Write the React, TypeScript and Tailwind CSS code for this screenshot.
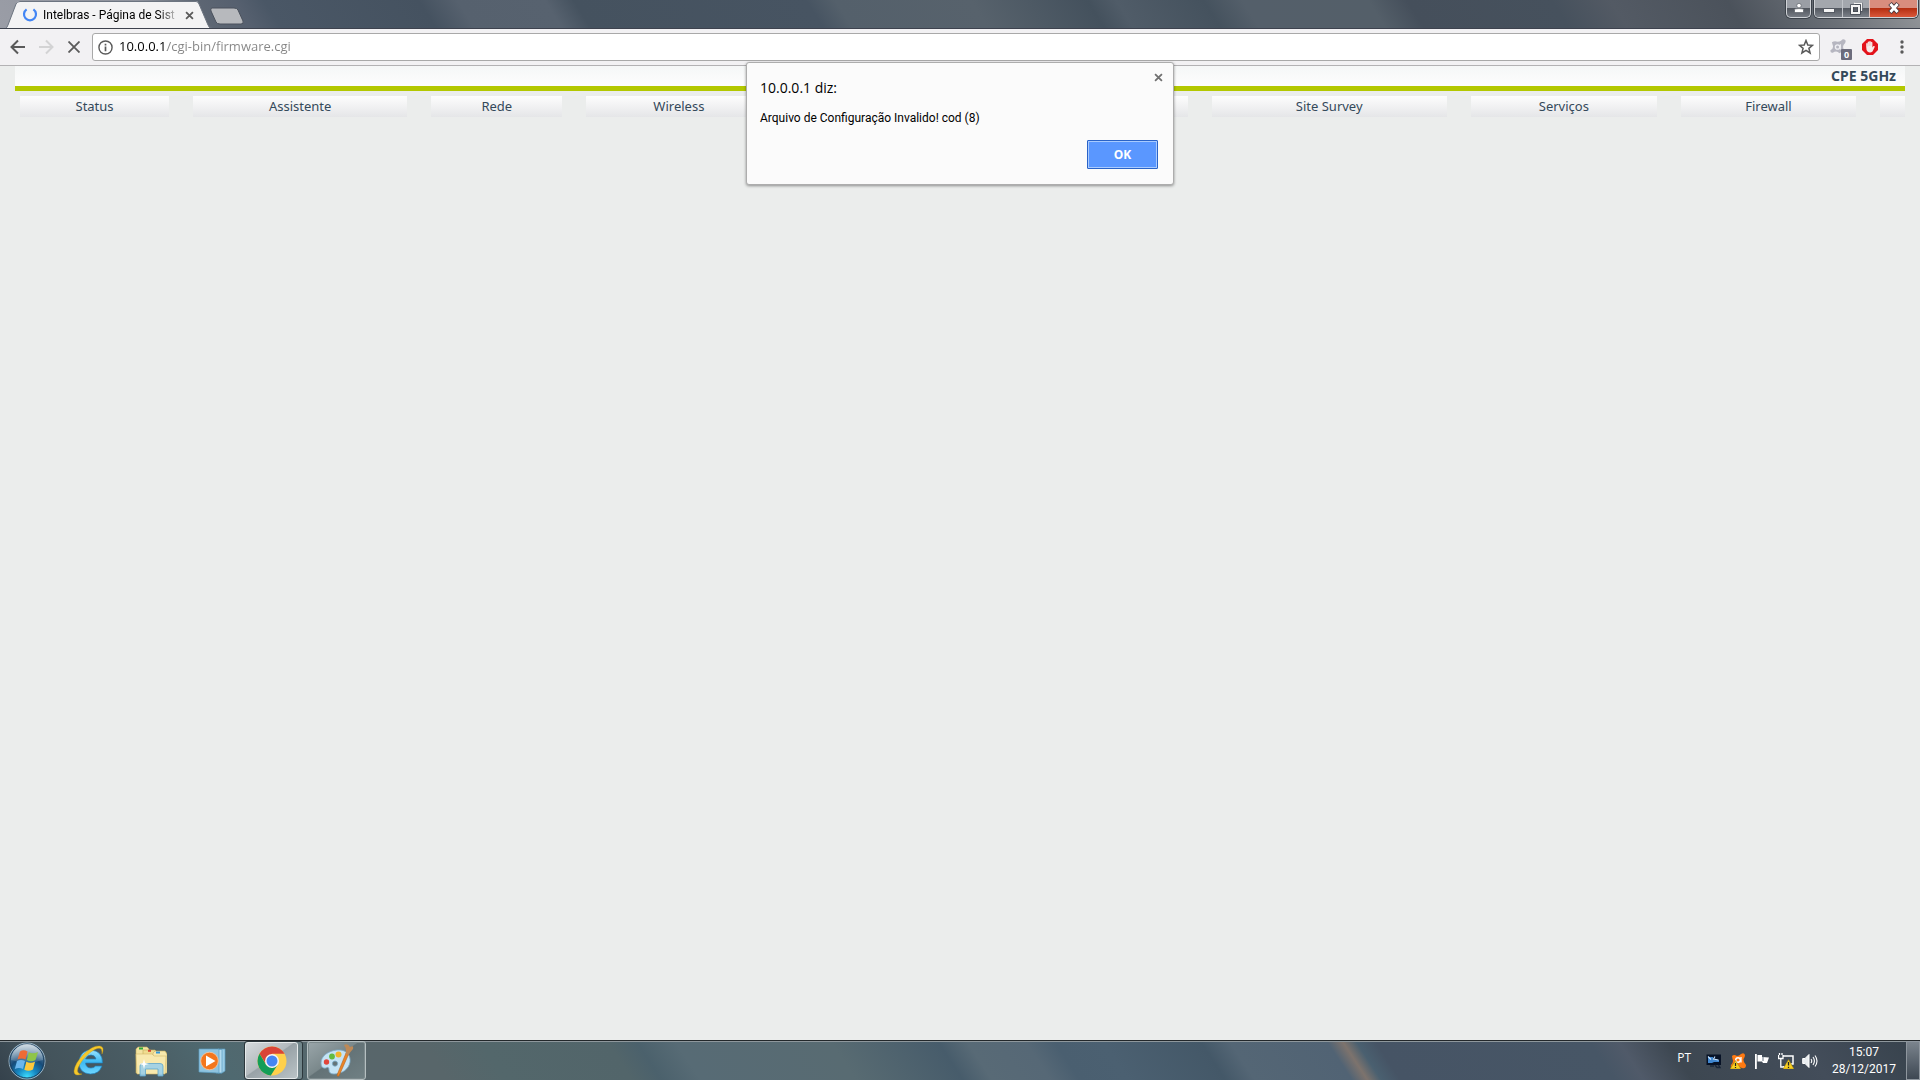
import React from 'react';

interface MenuTab {
    label: string;
    width: string;
}

const MENU_TABS: MenuTab[] = [
    { label: 'Status', width: 'grow-[149]' },
    { label: 'Assistente', width: 'grow-[214]' },
    { label: 'Rede', width: 'grow-[131]' },
    { label: 'Wireless', width: 'grow-[185]' },
    { label: '', width: 'grow-[392]' },
    { label: 'Site Survey', width: 'grow-[235]' },
    { label: 'Serviços', width: 'grow-[186]' },
    { label: 'Firewall', width: 'grow-[175]' },
    { label: '', width: 'grow-[25]' },
];

const CloseGlyph: React.FC<{ className?: string }> = ({ className }) => (
    <svg viewBox="0 0 10 10" className={className} fill="none" stroke="currentColor" strokeWidth="2">
        <path d="M1.2 1.2 8.8 8.8M8.8 1.2 1.2 8.8" />
    </svg>
);

/* ---------- Browser chrome ---------- */

const BrowserTab: React.FC = () => (
    <div className="relative w-[208px] h-[28px] ml-[5px] mt-px shrink-0">
        <svg className="absolute inset-0 w-full h-full" viewBox="0 0 208 28" preserveAspectRatio="none">
            <path d="M0 28Q2 27 3 24L11 3Q12 0 15 0H191Q193 0 194 3L203 24Q204 28 208 28Z" fill="#f3f3f4" />
            <path d="M0 28Q2 27 3 24L11 3Q12 .5 15 .5H191Q193 .5 194 3L203 24Q204 27.5 208 27.5" fill="none" stroke="#6c7480" />
        </svg>
        <div className="relative flex items-center h-full pl-[17px]">
            <svg viewBox="0 0 16 16" className="w-4 h-4 shrink-0" fill="none" stroke="#4285f4" strokeWidth="2.2">
                <path d="M4.6 2.4A6 6 0 1 0 11.4 2.4" />
            </svg>
            <span className="ml-[5px] w-[136px] whitespace-nowrap font-[Roboto,sans-serif] text-[12px] text-black mask-[linear-gradient(90deg,#000_116px,transparent_136px)]">
                Intelbras - Página de Sist
            </span>
            <button aria-label="Fechar guia" className="ml-[6px] text-[#5a5a5a]">
                <CloseGlyph className="w-[9px] h-[9px]" />
            </button>
        </div>
    </div>
);

const WindowControls: React.FC = () => (
    <div className="flex items-start gap-[3px] ml-auto mr-[2px] shrink-0">
        <button
            aria-label="Usuário"
            className="flex justify-center pt-[3px] w-[25px] h-[18px] rounded-b-[5px] border border-t-0 border-[#d0d3d7] ring-1 ring-[#3c424a] bg-[linear-gradient(#9a9ea5_0_8px,#4f545c_8px,#777c84)]"
        >
            <svg viewBox="0 0 10 10" className="w-[10px] h-[10px]" fill="#fff" stroke="#3c424a" strokeWidth=".5">
                <circle cx="5" cy="2.6" r="2.2" />
                <path d="M.5 9.5V7Q.5 5.6 5 5.6T9.5 7V9.5Z" />
            </svg>
        </button>
        <div className="flex h-[18px] rounded-b-[5px] border border-t-0 border-[#d0d3d7] ring-1 ring-[#3c424a] overflow-hidden">
            <button aria-label="Minimizar" className="flex justify-center w-[27px] pt-[8px] bg-[linear-gradient(#a3a7ad_0_8px,#52575f_8px,#7b8088)]">
                <span className="w-[12px] h-[5px] bg-[#f4f4f4] border border-[#555a63]" />
            </button>
            <button
                aria-label="Restaurar"
                className="flex justify-center w-[27px] pt-[2px] border-l border-[#c0c3c8] bg-[linear-gradient(#a3a7ad_0_8px,#52575f_8px,#7b8088)]"
            >
                <svg viewBox="0 0 13 13" className="w-[13px] h-[13px]" fill="none">
                    <path d="M5 2.5h6v7" stroke="#3f454e" strokeWidth="3.4" />
                    <path d="M4 1.5h7.5v7.5" stroke="#f4f4f4" strokeWidth="1.4" />
                    <rect x="2" y="4" width="7" height="7" stroke="#3f454e" strokeWidth="3.4" />
                    <rect x="2" y="4" width="7" height="7" stroke="#f4f4f4" strokeWidth="2" />
                </svg>
            </button>
            <button
                aria-label="Fechar"
                className="flex justify-center w-[48px] pt-[2px] border-l border-[#e0c0b8] bg-[linear-gradient(#d98d7e_0_8px,#b32d10_8px,#d9573a)]"
            >
                <svg viewBox="0 0 14 12" className="w-[14px] h-[12px]" fill="none">
                    <path d="M3 1.5 11 10.5M11 1.5 3 10.5" stroke="#4a3a40" strokeWidth="4.6" />
                    <path d="M3.4 2 10.6 10M10.6 2 3.4 10" stroke="#fff" strokeWidth="2.8" />
                </svg>
            </button>
        </div>
    </div>
);

const TitleBar: React.FC = () => (
    <div className="flex h-[29px] shrink-0 overflow-hidden border-b border-[#3d424e] bg-[linear-gradient(58deg,#9a9da6_0%,#8f939d_8%,#5d6673_11%,#56606f_13%,#4a5766_14.5%,#455260_22.5%,#56616e_24.5%,#57626f_29%,#45525f_30.5%,#475462_42.5%,#54606b_44%,#57626c_51%,#44515d_57%,#505c68_58.5%,#45525e_63%,#545f6a_65%,#545f69_71.5%,#454f5b_73.5%,#46515d_81%,#535a64_84%,#4b525b_90%,#6b7077_95%,#94979b_100%)]">
        <BrowserTab />
        <button aria-label="Nova guia" className="self-start mt-[7px] -ml-[4px]">
            <svg viewBox="0 0 36 18" className="w-9 h-[18px]">
                <path d="M3 1H25Q28 1 29 3L34 14Q35 17 32 17H11Q8 17 7 15L2 4Q1 1 3 1Z" fill="#b7b9bd" stroke="#4a515c" />
            </svg>
        </button>
        <WindowControls />
    </div>
);

const AddressBar: React.FC = () => (
    <div className="flex items-center h-[37px] px-[10px] shrink-0 bg-[#f2f1f3] border-b border-[#b3b2b4]">
        <div className="flex items-center gap-3 text-[#5a5a5a]">
            <button aria-label="Voltar">
                <svg viewBox="0 0 16 16" className="w-4 h-4" fill="none" stroke="currentColor" strokeWidth="2">
                    <path d="M15 8H2.5M8 1.5 1.5 8 8 14.5" />
                </svg>
            </button>
            <button aria-label="Avançar" className="text-[#d3d3d4]">
                <svg viewBox="0 0 16 16" className="w-4 h-4" fill="none" stroke="currentColor" strokeWidth="2">
                    <path d="M1 8H13.5M8 1.5 14.5 8 8 14.5" />
                </svg>
            </button>
            <button aria-label="Parar" className="p-[2px]">
                <svg viewBox="0 0 12 12" className="w-3 h-3" fill="none" stroke="currentColor" strokeWidth="1.8">
                    <path d="M.5.5 11.5 11.5M11.5.5.5 11.5" />
                </svg>
            </button>
        </div>
        <div className="flex items-center grow h-7 ml-[10px] px-[5px] bg-white border border-[#a9a9a9] rounded-[3px]">
            <svg viewBox="0 0 16 16" className="w-[15px] h-[15px] shrink-0" fill="none" stroke="#5a5a5a">
                <circle cx="8" cy="8" r="7" strokeWidth="1.5" />
                <path d="M8 7V12M8 4V5.8" strokeWidth="1.8" />
            </svg>
            {/* host in black, path in grey */}
            <input
                type="text"
                aria-label="Endereço"
                defaultValue="10.0.0.1/cgi-bin/firmware.cgi"
                className="grow ml-[6px] text-[13px] outline-none text-transparent caret-black bg-clip-text bg-[linear-gradient(90deg,#000_48px,#858585_48px)]"
            />
            <button aria-label="Favoritar">
                <svg viewBox="0 0 16 16" className="w-4 h-4" fill="none" stroke="#5a5a5a" strokeWidth="1.5">
                    <path d="M8 1.5 9.8 6 14.5 6.3 10.9 9.3 12.1 14 8 11.4 3.9 14 5.1 9.3 1.5 6.3 6.2 6Z" />
                </svg>
            </button>
        </div>
        <button aria-label="Extensão de segurança" className="relative w-[22px] h-[22px] ml-[10px]">
            <svg viewBox="0 0 18 18" className="w-[17px] h-[17px]">
                <path d="M2 3.5Q5 1.5 8 3Q10 3 12 1.5Q14-1 16.5 1.5Q17 4 14.5 6Q13 9 15 12L10 15Q7 12 3 14.5Q0 15 .5 12Q4 10 3 7Z" fill="#b6b6c0" />
                <circle cx="8" cy="8.5" r="2.3" fill="none" stroke="#efeff3" strokeWidth="1.4" />
                <path d="M11 5.5V11" stroke="#efeff3" strokeWidth="1.2" />
            </svg>
            <span className="absolute right-0 -bottom-[2px] w-[11px] h-[11px] bg-[#6c6c7c] text-white text-[9px] leading-[11px] font-bold text-center rounded-[1px]">0</span>
        </button>
        <button aria-label="Bloqueador" className="ml-[10px]">
            <svg viewBox="0 0 16 16" className="w-4 h-4">
                <path d="M5 0H11L16 5V11L11 16H5L0 11V5Z" fill="#e3131b" />
                <path d="M4.2 8V4.5Q5 3.6 5.7 4.5V3Q6.5 2 7.2 3V2.4Q8 1.5 8.8 2.4V3.2Q9.7 2.4 10.4 3.4V8.5L11.5 7Q12.8 6.7 12.8 7.8L10.5 12.6Q8 14.5 5.5 12.6Q4.2 11 4.2 8Z" fill="#f7ecea" />
                <path d="M5.8 4V7.5M7.3 3V7M8.9 3V7" stroke="#e9a09c" strokeWidth=".4" />
            </svg>
        </button>
        <button aria-label="Menu" className="ml-[22px] mr-[6px]">
            <svg viewBox="0 0 4 14" className="w-1 h-[14px]" fill="#5a5a5a">
                <circle cx="2" cy="2" r="1.7" />
                <circle cx="2" cy="7" r="1.7" />
                <circle cx="2" cy="12" r="1.7" />
            </svg>
        </button>
    </div>
);

/* ---------- Router page ---------- */

const RouterPage: React.FC = () => (
    <main className="grow px-[15px] bg-[#ebedec] text-[#34495a] font-['Noto_Sans','Open_Sans',sans-serif]">
        <header className="flex items-center justify-end h-[25px] pr-[9px] bg-linear-to-b from-[#f5f7f7] to-[#fdfdfd] border-b-[5px] border-[#b3c800]">
            <h1 className="text-[14px] font-bold leading-5">CPE 5GHz</h1>
        </header>
        <nav className="flex gap-6 mt-[5px] ml-[5px]">
            {MENU_TABS.map((tab, i) => (
                <a
                    key={i}
                    href="#"
                    aria-label={tab.label || 'Menu'}
                    className={`basis-0 min-w-0 h-[21px] text-center text-[13px] leading-[21px] bg-linear-to-b from-[#fdfdfd] to-[#e5e6e8] ${tab.width}`}
                >
                    {tab.label}
                </a>
            ))}
        </nav>
    </main>
);

const AlertDialog: React.FC = () => (
    <div
        role="alertdialog"
        aria-labelledby="alert-title"
        className="absolute top-[62px] left-1/2 -translate-x-1/2 w-[428px] h-[123px] pl-[13px] pr-[15px] pt-[15px] bg-[#fbfbfb] border border-[#adadad] rounded-[3px] shadow-[0_1px_3px_rgba(0,0,0,0.4)] text-black"
    >
        <button aria-label="Fechar" className="absolute top-[10px] right-[10px] text-[#707070]">
            <CloseGlyph className="w-[9px] h-[9px]" />
        </button>
        <h2 id="alert-title" className="text-[14px] leading-5">10.0.0.1 diz:</h2>
        <p className="mt-3 font-[Roboto,sans-serif] text-[12px] leading-4">Arquivo de Configuração Invalido! cod (8)</p>
        <div className="flex justify-end mt-[14px]">
            <button className="w-[71px] h-[29px] text-[12px] font-bold text-white bg-[#5a97ff] border border-[#2a63c8] rounded-[1px] shadow-[inset_0_0_0_1px_#a9cbff]">
                OK
            </button>
        </div>
    </div>
);

/* ---------- Taskbar ---------- */

const StartOrb: React.FC = () => (
    <svg viewBox="0 0 38 38" className="w-[38px] h-[38px]">
        <defs>
            <radialGradient id="orb" cx=".5" cy=".95" r=".9">
                <stop offset="0" stopColor="#3fe0ff" />
                <stop offset=".3" stopColor="#1689c4" />
                <stop offset=".6" stopColor="#174b78" />
                <stop offset="1" stopColor="#7d9db4" />
            </radialGradient>
            <linearGradient id="orbGloss" x1="0" y1="0" x2="0" y2="1">
                <stop offset="0" stopColor="#fff" stopOpacity=".65" />
                <stop offset="1" stopColor="#fff" stopOpacity=".12" />
            </linearGradient>
        </defs>
        <circle cx="19" cy="19" r="18" fill="url(#orb)" stroke="#9db6c6" />
        <circle cx="19" cy="19" r="17" fill="none" stroke="#1d3f5d" />
        <path d="M3 18A16 16 0 0 1 35 18Q19 23 3 18Z" fill="url(#orbGloss)" />
        <path d="M12 9.5Q15.5 7 19.5 9.5L17.5 17.5Q13.5 15.5 9.5 17.5Z" fill="#ee6b35" />
        <path d="M20.8 10.3Q25 12.5 30 10L27.5 18Q23 20.5 18.8 18Z" fill="#8fc549" />
        <path d="M9 19Q13 16.8 17 19L15 27Q11 24.8 6.8 27Z" fill="#6bb6ec" />
        <path d="M18.3 19.7Q22.5 22 27 19.7L25 27.5Q20.5 30 16.3 27.7Z" fill="#fdc93c" />
    </svg>
);

const InternetExplorerIcon: React.FC = () => (
    <svg viewBox="0 0 32 32" className="w-8 h-8">
        <defs>
            <linearGradient id="ie" x1="0" y1="0" x2="0" y2="1">
                <stop offset="0" stopColor="#9be3ff" />
                <stop offset=".5" stopColor="#3db9f2" />
                <stop offset="1" stopColor="#6fd6ff" />
            </linearGradient>
        </defs>
        <path d="M29.5 18H12.5Q13 23 18 23Q21 23 22.5 21H29Q26 29 17.5 29Q6 28.5 6 17Q7 5.5 18 5Q29.5 6 29.5 18ZM12.5 14H23Q22 10 18 10T12.5 14Z" fill="url(#ie)" stroke="#1e80bd" strokeWidth=".7" />
        <path d="M29 9Q32 2 27 1Q20 0 11 9Q2 18 1 26Q1 32 9 29Q3 29 5 23Q8 15 17 7.5Q26 1 28.5 4.5Q29 6 29 9Z" fill="#f6c82a" stroke="#c79a14" strokeWidth=".4" />
    </svg>
);

const ExplorerIcon: React.FC = () => (
    <svg viewBox="0 0 32 32" className="w-8 h-8">
        <path d="M1 4 3 2H12L14 4V28H1Z" fill="#f3e3a0" stroke="#c5ab5c" strokeWidth=".6" />
        <path d="M8 5H20L22 7H31V28H8Z" fill="#f0dc8f" stroke="#c5ab5c" strokeWidth=".6" />
        <path d="M18 8 20 6H30L32 9V28H18Z" fill="#f7e8ac" stroke="#c5ab5c" strokeWidth=".6" />
        <path d="M1 9H17L19 11H31L30 29H2Z" fill="#f8e9ae" stroke="#d3b968" strokeWidth=".6" />
        <path d="M4 3.5H8" stroke="#31a839" strokeWidth="2" />
        <path d="M13 5.8H16" stroke="#d2452f" strokeWidth="2" />
        <path d="M21 7.5H25" stroke="#3297d8" strokeWidth="2" />
        <path d="M5 31V21Q5 18.5 8 18.5H25Q28 18.5 28 21V31H23V24H10.5V31Z" fill="#9bcfe9" fillOpacity=".9" stroke="#5ea6cc" strokeWidth=".8" />
        <path d="M9 14 10 18 14 19 10 20 9 24 8 20 4 19 8 18Z" fill="#fff" />
    </svg>
);

const MediaPlayerIcon: React.FC = () => (
    <svg viewBox="0 0 28 28" className="w-7 h-7">
        <path d="M20 2H27V24L24 26H20Z" fill="#9ccde6" stroke="#5b9dc1" strokeWidth=".7" />
        <path d="M18 2.5H24V26H18Z" fill="#b3dbef" stroke="#5b9dc1" strokeWidth=".7" />
        <path d="M1 2H21V26L1 25Z" fill="#8fc4e0" stroke="#5b9dc1" strokeWidth=".7" />
        <circle cx="11.5" cy="14" r="8.8" fill="#f3761d" stroke="#fbc9a0" strokeWidth=".8" />
        <path d="M8 8.5 17.5 14 8 19.5Z" fill="#fff" />
    </svg>
);

const ChromeIcon: React.FC = () => (
    <svg viewBox="0 0 30 30" className="w-[30px] h-[30px]">
        <circle cx="15" cy="15" r="14.5" fill="#ffd04b" />
        <path d="M2.5 7.7A14.5 14.5 0 0 1 27.6 7.8H15L9 18Z" fill="#da4437" />
        <path d="M2.5 7.7 9 18.5 15 22 13.8 29.45A14.5 14.5 0 0 1 2.5 7.7Z" fill="#139d58" />
        <path d="M13.8 29.45 20.8 18.5 15 22 10 18Z" fill="#139d58" />
        <circle cx="15" cy="15" r="7" fill="#f4f4f4" />
        <circle cx="15" cy="15" r="5.5" fill="#4586f3" />
    </svg>
);

const PaintIcon: React.FC = () => (
    <svg viewBox="0 0 34 34" className="w-[34px] h-[34px]">
        <path
            fillRule="evenodd"
            d="M17 6C26 5 31 11 30 18C29 25 22 30 14 30Q9 30 9 26Q9 22 6 24Q1 25 1 19C1 12 8 7 17 6ZM15 17A2.6 2.6 0 1 0 15 22.2A2.6 2.6 0 1 0 15 17Z"
            fill="#c5e3f5"
            stroke="#7ba9c6"
            strokeWidth=".8"
        />
        <circle cx="6.5" cy="18" r="2.7" fill="#e1463c" />
        <circle cx="12" cy="12.5" r="2.9" fill="#63bb40" />
        <circle cx="18.5" cy="10.5" r="3" fill="#f3b52c" />
        <path d="M26 9 28.5 10.5 19 32Q17 33 17 31Z" fill="#e98428" stroke="#ad5c18" strokeWidth=".5" />
        <path d="M24 1Q28-1 30 3Q34 1 33 5Q31 7 28.5 11L25.5 9.5Q27 5 24 1Z" fill="#bd8957" />
    </svg>
);

const TrayIcons: React.FC = () => (
    <div className="flex items-center gap-2">
        <svg viewBox="0 0 16 16" className="w-4 h-4">
            <path d="M.5 1.5H15V12H.5Z" fill="#071226" />
            <path d="M2 4H7L8 7H13V9H8L6 10H2Z" fill="#3f86cf" />
            <path d="M2 3.5 5 6.5M9 3.5 7.5 6 12.5 7" stroke="#c6e4ff" strokeWidth="1.1" fill="none" />
            <path d="M4 13H8M9 12 11 14.5H14L12.5 12" stroke="#1a2638" strokeWidth="1.4" fill="none" />
        </svg>
        <svg viewBox="0 0 16 16" className="w-4 h-4">
            <path d="M2 3Q4 1 7 3Q9 3 11 1Q14-1 15 2Q15 4 13.5 6Q13 9 16 12Q16 16 12 15Q8 13 3 15Q0 15 1 12Q4 9 2.5 6Z" fill="#ff7a12" />
            <circle cx="8" cy="7" r="2.3" fill="none" stroke="#fff" strokeWidth="1.4" />
            <path d="M11 4V9.5" stroke="#fff" strokeWidth="1.3" />
            <path d="M5.5 7.5 11 16H0Z" fill="#f8cf20" stroke="#8f7210" strokeWidth=".5" />
            <path d="M5.5 10V13M5.5 14V15" stroke="#222" strokeWidth="1.2" />
        </svg>
        <svg viewBox="0 0 16 16" className="w-4 h-4" fill="#fff">
            <path d="M1 1H2.8V16H1ZM3.5 2H8V4L15 4.5 13 10H9L8 8.5H3.5Z" />
            <path d="M9 3.5V8" stroke="#65717f" />
        </svg>
        <svg viewBox="0 0 16 16" className="w-4 h-4" fill="none">
            <path d="M5 3H15V11H8M5 14H8" stroke="#fff" strokeWidth="1.5" />
            <path d="M.5 2V5.5H5V2M1.5 0V2M4 0V2M2.8 6V14H6" stroke="#fff" strokeWidth="1.3" />
            <path d="M10.5 6.5 16 16H5Z" fill="#f8cf20" stroke="#8f7210" strokeWidth=".5" />
            <path d="M10.5 9V12.5M10.5 13.7V15" stroke="#222" strokeWidth="1.3" />
        </svg>
        <svg viewBox="0 0 16 16" className="w-4 h-4" fill="none" stroke="#fff">
            <path d="M.7 5.5H3L7 1.5V14.5L3 10.5H.7Z" fill="#e9edf0" />
            <path d="M9 6Q10.5 8 9 10M11 4Q13.8 8 11 12M13 2.5Q17 8 13 13.5" strokeWidth="1.1" />
        </svg>
    </div>
);

const Taskbar: React.FC = () => (
    <footer className="flex items-center h-10 shrink-0 pl-2 border-t border-[#23282b] shadow-[inset_0_1px_0_#8e979c] text-white text-[12px] bg-[linear-gradient(57deg,#35424c_0%,#43535b_3%,#4a5d64_8%,#4f6970_12%,#58666b_19%,#58666a_23%,#53676b_26%,#52656a_32.5%,#4b616c_34%,#576b75_36%,#586b72_44%,#475c6b_49.5%,#586a76_51%,#566876_54%,#4a5f70_55.5%,#4b6071_58%,#445868_63%,#546675_64.5%,#516374_69.5%,#7d736d_70.3%,#4a6070_71%,#465465_72%,#475666_83%,#505a69_84.5%,#3d4751_87%,#434d5a_94%,#37424c_100%)]">
        <button aria-label="Iniciar">
            <StartOrb />
        </button>
        <button aria-label="Internet Explorer" className="ml-[27px]">
            <InternetExplorerIcon />
        </button>
        <button aria-label="Windows Explorer" className="ml-[30px]">
            <ExplorerIcon />
        </button>
        <button aria-label="Media Player" className="ml-[31px]">
            <MediaPlayerIcon />
        </button>
        <div className="flex self-stretch ml-[18px] pr-1 border border-[#2c373c] rounded-[3px] bg-[#71858a]">
            <button
                aria-label="Google Chrome"
                className="flex items-center justify-center w-[53px] border border-[#e6eaeb] rounded-[3px] bg-[linear-gradient(145deg,#d5dadc_0%,#b3babe_46%,#98a2a7_48%,#bac3c6_100%)]"
            >
                <ChromeIcon />
            </button>
        </div>
        <button
            aria-label="Paint"
            className="flex items-center justify-center self-stretch w-[59px] ml-1 border border-[#b5bfc1] ring-1 ring-inset ring-[#7c898c] rounded-[3px] bg-[linear-gradient(145deg,#9aa6aa_0%,#7a888b_45%,#637276_47%,#708084_100%)]"
        >
            <PaintIcon />
        </button>
        <div className="flex items-center ml-auto self-stretch">
            <span className="mr-[15px] mb-[6px]">PT</span>
            <TrayIcons />
            <time dateTime="2017-12-28T15:07" className="w-[88px] pl-1 text-center font-[Roboto,sans-serif] leading-[17px]">
                15:07
                <br />
                28/12/2017
            </time>
            <button
                aria-label="Mostrar área de trabalho"
                className="self-stretch w-[14px] border border-[#8e969e] bg-linear-to-b from-[#7b848d] to-[#3e4853]"
            />
        </div>
    </footer>
);

export default function App() {
    return (
        <div className="relative flex flex-col min-h-screen font-['Open_Sans','Noto_Sans',sans-serif]">
            <TitleBar />
            <AddressBar />
            <RouterPage />
            <AlertDialog />
            <Taskbar />
        </div>
    );
}
